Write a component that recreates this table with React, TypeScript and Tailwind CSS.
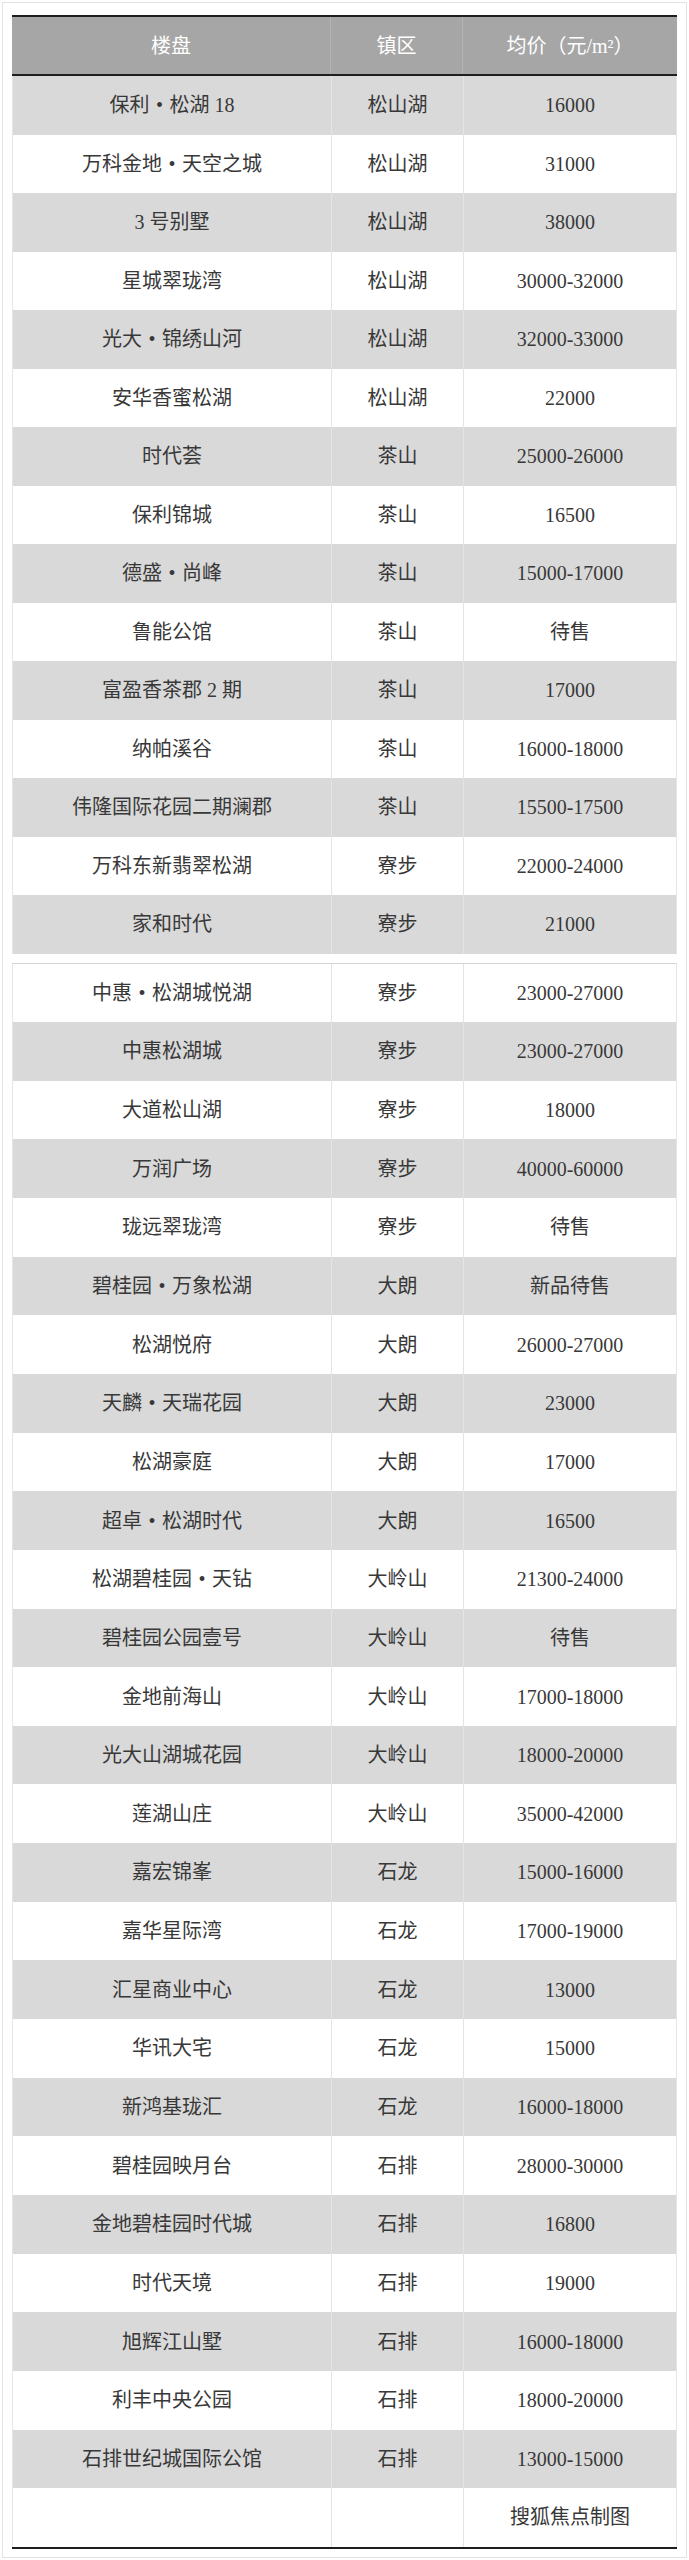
import React from "react";

type Row = [string, string, string];

const block1: Row[] = [
  ["保利·松湖 18", "松山湖", "16000"],
  ["万科金地·天空之城", "松山湖", "31000"],
  ["3 号别墅", "松山湖", "38000"],
  ["星城翠珑湾", "松山湖", "30000-32000"],
  ["光大·锦绣山河", "松山湖", "32000-33000"],
  ["安华香蜜松湖", "松山湖", "22000"],
  ["时代荟", "茶山", "25000-26000"],
  ["保利锦城", "茶山", "16500"],
  ["德盛·尚峰", "茶山", "15000-17000"],
  ["鲁能公馆", "茶山", "待售"],
  ["富盈香茶郡 2 期", "茶山", "17000"],
  ["纳帕溪谷", "茶山", "16000-18000"],
  ["伟隆国际花园二期澜郡", "茶山", "15500-17500"],
  ["万科东新翡翠松湖", "寮步", "22000-24000"],
  ["家和时代", "寮步", "21000"],
];

const block2: Row[] = [
  ["中惠·松湖城悦湖", "寮步", "23000-27000"],
  ["中惠松湖城", "寮步", "23000-27000"],
  ["大道松山湖", "寮步", "18000"],
  ["万润广场", "寮步", "40000-60000"],
  ["珑远翠珑湾", "寮步", "待售"],
  ["碧桂园·万象松湖", "大朗", "新品待售"],
  ["松湖悦府", "大朗", "26000-27000"],
  ["天麟·天瑞花园", "大朗", "23000"],
  ["松湖豪庭", "大朗", "17000"],
  ["超卓·松湖时代", "大朗", "16500"],
  ["松湖碧桂园·天钻", "大岭山", "21300-24000"],
  ["碧桂园公园壹号", "大岭山", "待售"],
  ["金地前海山", "大岭山", "17000-18000"],
  ["光大山湖城花园", "大岭山", "18000-20000"],
  ["莲湖山庄", "大岭山", "35000-42000"],
  ["嘉宏锦峯", "石龙", "15000-16000"],
  ["嘉华星际湾", "石龙", "17000-19000"],
  ["汇星商业中心", "石龙", "13000"],
  ["华讯大宅", "石龙", "15000"],
  ["新鸿基珑汇", "石龙", "16000-18000"],
  ["碧桂园映月台", "石排", "28000-30000"],
  ["金地碧桂园时代城", "石排", "16800"],
  ["时代天境", "石排", "19000"],
  ["旭辉江山墅", "石排", "16000-18000"],
  ["利丰中央公园", "石排", "18000-20000"],
  ["石排世纪城国际公馆", "石排", "13000-15000"],
  ["", "", "搜狐焦点制图"],
];

function Name({ text }: { text: string }) {
  const parts = text.split("·");
  return (
    <span className="whitespace-nowrap">
      {parts.map((p, i) => (
        <React.Fragment key={i}>
          {i > 0 && <span className="inline-block w-[20px] text-center">•</span>}
          {p}
        </React.Fragment>
      ))}
    </span>
  );
}

function TableRow({ row, gray, h }: { row: Row; gray: boolean; h: string }) {
  return (
    <div className={`flex ${h} ${gray ? "bg-[#d9d9d9]" : "bg-white"}`}>
      <div className="w-[318px] flex items-center justify-center">
        <Name text={row[0]} />
      </div>
      <div className="w-[132px] flex items-center justify-center border-l border-[#e4e4e4]">
        {row[1]}
      </div>
      <div className="flex-1 flex items-center justify-center border-l border-[#e4e4e4]">
        {row[2]}
      </div>
    </div>
  );
}

export default function App() {
  return (
    <div className="w-[689px] h-[2560px] bg-white p-[2px]">
      <div
        className="h-full border border-[#e3e3e3] px-[9px] pt-[12px] text-[20px] text-[#383838]"
        style={{ fontFamily: '"Liberation Serif", "Noto Sans CJK SC", serif' }}
      >
        <div className="w-[665px]">
          <div className="flex h-[61px] bg-[#a6a6a6] border-t-2 border-b-2 border-[#1e1e1e] text-white">
            <div className="w-[318px] flex items-center justify-center">楼盘</div>
            <div className="w-[132px] flex items-center justify-center border-l border-[#b4b4b4]">镇区</div>
            <div className="flex-1 flex items-center justify-center border-l border-[#b4b4b4]">
              均价（元/m²）
            </div>
          </div>
          <div className="border-x border-[#e6e6e6]">
            {block1.map((r, i) => (
              <TableRow key={i} row={r} gray={i % 2 === 0} h="h-[58.5px]" />
            ))}
          </div>
          <div className="h-[10px] bg-white border-b border-[#d4d4d4]" />
          <div className="border-x border-[#e6e6e6]">
            {block2.map((r, i) => (
              <TableRow key={i} row={r} gray={i % 2 === 1} h="h-[58.65px]" />
            ))}
          </div>
          <div className="h-[2px] bg-[#1e1e1e]" />
        </div>
      </div>
    </div>
  );
}
